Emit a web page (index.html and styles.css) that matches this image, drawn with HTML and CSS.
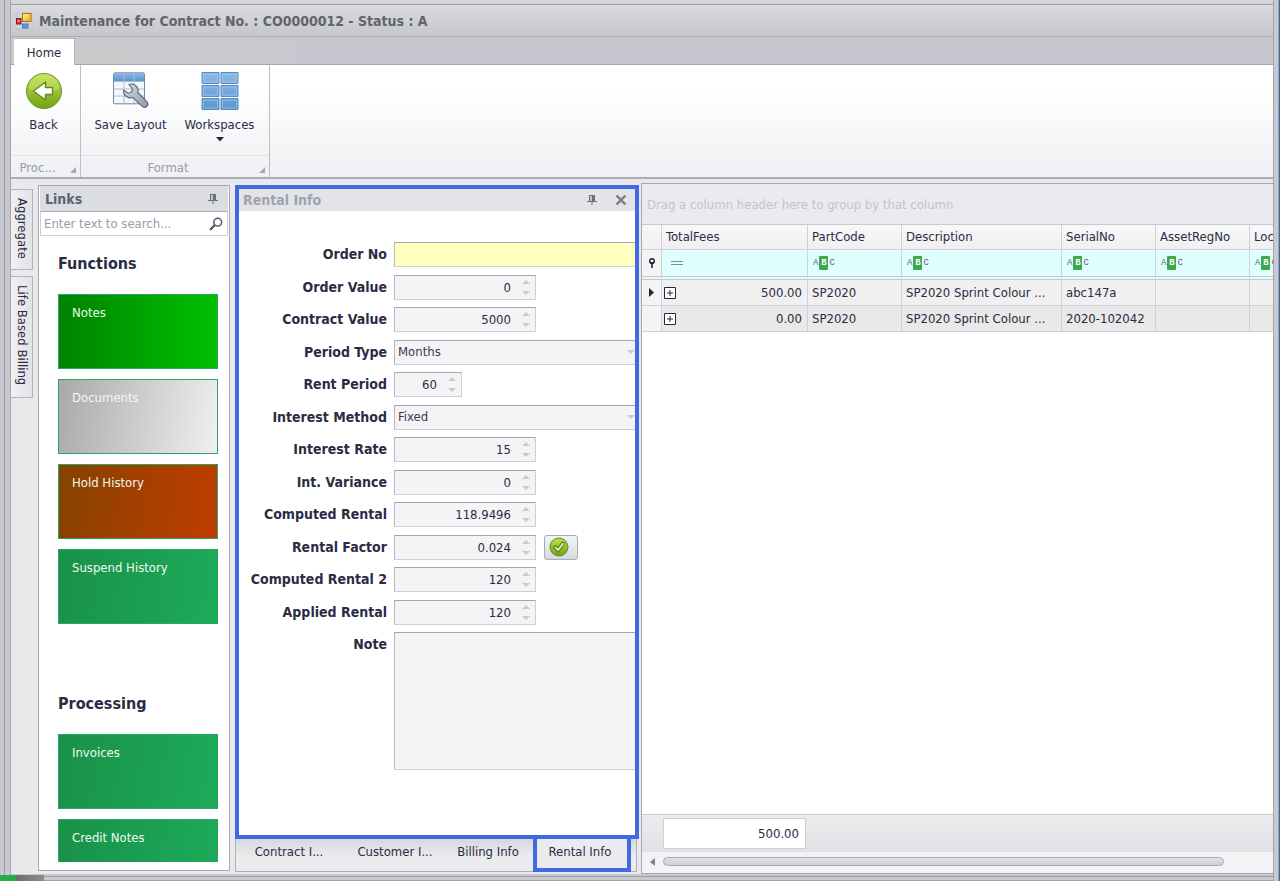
FILE: index.html
```
<!DOCTYPE html>
<html lang="en">
<head>
<meta charset="utf-8">
<title>Maintenance for Contract</title>
<link rel="stylesheet" href="styles.css">
</head>
<body>
<svg class="defs" width="0" height="0" aria-hidden="true">
  <defs>
    <linearGradient id="green" x1="0" y1="0" x2="0" y2="1"><stop offset="0" stop-color="#bfe052"/><stop offset="1" stop-color="#6fa50f"/></linearGradient>
    <linearGradient id="blue" x1="0" y1="0" x2="0" y2="1"><stop offset="0" stop-color="#8db9e6"/><stop offset="1" stop-color="#5b95d0"/></linearGradient>
    <linearGradient id="steel" x1="0" y1="0" x2="1" y2="1"><stop offset="0" stop-color="#d3dbe4"/><stop offset="1" stop-color="#8e9aab"/></linearGradient>
    <linearGradient id="gold" x1="0" y1="0" x2="1" y2="1"><stop offset="0" stop-color="#fff0a0"/><stop offset="1" stop-color="#eda80c"/></linearGradient>
  </defs>
  <symbol id="pin" viewBox="0 0 10 12"><path d="M2 1h6v6h2v1H5.500v3h-1V8H0V7h2z" fill="#6d717f"/><path d="M3 2h2v5H3z" fill="#c3c5cd"/></symbol>
  <symbol id="spin" viewBox="0 0 8 17"><path d="M0 5l4-4 4 4zM0 12h8l-4 4z" fill="#c9cace"/></symbol>
  <symbol id="plus" viewBox="0 0 12 12"><path d="M.5.5h11v11H.5zM3 6h6M6 3v6" fill="#fff" stroke="#26263c"/></symbol>
  <symbol id="corner" viewBox="0 0 6 6"><path d="M6 0v6H0z" fill="#a5a7b0"/></symbol>
</svg>
<div class="window">
  <header class="titlebar">
    <svg width="18" height="18" viewBox="0 0 18 18"><path d="M1 1h16v16H1z" fill="#d4d5d8" stroke="#bbbcc0" stroke-width=".6"/><rect x="7.500" y="1.500" width="8.500" height="8" fill="url(#gold)" stroke="#a87908"/><rect x="1.500" y="6.500" width="4.500" height="5.500" fill="#d43a35" stroke="#8f1717"/><rect x="2.800" y="8" width="1.600" height="1.800" fill="#ffb1a4"/><rect x="7.500" y="12" width="5.500" height="4" fill="#5b9cf0" stroke="#4677bd"/></svg>
    <h1>Maintenance for Contract No. : CO0000012 - Status : A</h1>
  </header>
  <nav class="ribbon-tabs"><button type="button" class="ribbon-tab">Home</button></nav>
  <section class="ribbon">
    <div class="group group-process">
      <div class="group-items">
        <button type="button" class="tool">
          <svg width="38" height="38" viewBox="0 0 38 38"><circle cx="19" cy="19" r="17.500" fill="url(#green)" stroke="#688f2b"/><path d="M4 17a15 15 0 0 1 30 0q-15 6-30 0z" fill="#d6ee7e" opacity=".35"/><path d="M8.500 19l12-9v5.500h7v7h-7V28z" fill="#fff" stroke="#62892a" stroke-width="1.400" stroke-linejoin="round"/></svg>
          <span>Back</span>
        </button>
      </div>
      <div class="group-name"><span>Proc...</span><svg width="6" height="6"><use href="#corner"/></svg></div>
    </div>
    <div class="group group-format">
      <div class="group-items">
        <button type="button" class="tool">
          <svg width="38" height="38" viewBox="0 0 38 38"><rect x="1.500" y=".800" width="31" height="31" rx="1.500" fill="#f3f7fc" stroke="#6d87a8"/><path d="M2 1h30v8H2z" fill="url(#blue)"/><path d="M2 9.500h30M2 17h30M2 24h30M12 1v30M22 1v30" stroke="#a9bcd4" fill="none"/><path d="M17 12.500c3.500-1.600 8 .5 9 4.500.3 1.300.2 2.400-.2 3.500l9.400 9.500c2.300 3.500-2 7-5 4.300l-9.300-8.800c-4 1.200-8.200-.8-9.200-4.800l-.1-2.400 4.400 2.700c2.700.2 4.600-1.600 4.300-4.400z" fill="url(#steel)" stroke="#5a6678" stroke-width="1.100"/></svg>
          <span>Save Layout</span>
        </button>
        <button type="button" class="tool">
          <svg width="38" height="38" viewBox="0 0 38 38"><g fill="url(#blue)" stroke="#5b8cc0"><path d="M1 .500h17v11H1zM20 .500h17v11H20zM1 13.500h17v11H1zM20 13.500h17v11H20zM1 26.500h17v11H1zM20 26.500h17v11H20z"/></g><path d="M2.500 2h14v8h-14zM21.500 2h14v8h-14zM2.500 15h14v8h-14zM21.500 15h14v8h-14zM2.500 28h14v8h-14zM21.500 28h14v8h-14z" fill="none" stroke="#a8cbee" stroke-width=".7"/></svg>
          <span>Workspaces</span>
          <svg class="drop" width="8" height="5" viewBox="0 0 8 5"><path d="M0 0h8L4 4.500z" fill="#26263c"/></svg>
        </button>
      </div>
      <div class="group-name"><span>Format</span><svg width="6" height="6"><use href="#corner"/></svg></div>
    </div>
  </section>

  <main class="workspace">
    <nav class="side-tabs">
      <button type="button" class="side-tab">Aggregate</button>
      <button type="button" class="side-tab side-tab-long">Life Based Billing</button>
    </nav>

    <aside class="links">
      <div class="panel-head"><h2>Links</h2><svg width="10" height="12"><use href="#pin"/></svg></div>
      <div class="search">
        <input type="text" placeholder="Enter text to search..." aria-label="Search links">
        <svg width="14" height="14" viewBox="0 0 14 14"><circle cx="8.700" cy="5.200" r="3.900" fill="none" stroke="#55566a" stroke-width="1.500"/><path d="M5.800 8L1 13" stroke="#55566a" stroke-width="2.200"/></svg>
      </div>
      <div class="link-list">
        <section class="link-group">
          <h3>Functions</h3>
          <button type="button" class="tile tile-notes">Notes</button>
          <button type="button" class="tile tile-documents">Documents</button>
          <button type="button" class="tile tile-hold">Hold History</button>
          <button type="button" class="tile">Suspend History</button>
        </section>
        <section class="link-group">
          <h3>Processing</h3>
          <button type="button" class="tile">Invoices</button>
          <button type="button" class="tile">Credit Notes</button>
        </section>
      </div>
    </aside>

    <section class="rental">
      <div class="rental-box">
        <div class="panel-head panel-head-idle"><h2>Rental Info</h2>
          <div class="head-icons"><svg width="10" height="12"><use href="#pin"/></svg><svg width="12" height="10" viewBox="0 0 12 10"><path d="M1.500.5l9 9M10.500.5l-9 9" stroke="#7a7d8a" stroke-width="2.400"/></svg></div>
        </div>
        <form class="form">
          <div class="fields">
            <label for="orderNo">Order No</label><div class="field wide"><input id="orderNo" class="required" type="text"></div>
            <label for="orderValue">Order Value</label><div class="field num"><input id="orderValue" type="text" value="0"><svg width="8" height="17"><use href="#spin"/></svg></div>
            <label for="contractValue">Contract Value</label><div class="field num"><input id="contractValue" type="text" value="5000"><svg width="8" height="17"><use href="#spin"/></svg></div>
            <label for="periodType">Period Type</label><div class="field wide"><select id="periodType"><option>Months</option></select><svg width="8" height="5" viewBox="0 0 8 5"><path d="M0 0h8L4 4z" fill="#c9cace"/></svg></div>
            <label for="rentPeriod">Rent Period</label><div class="field num short"><input id="rentPeriod" type="text" value="60"><svg width="8" height="17"><use href="#spin"/></svg></div>
            <label for="interestMethod">Interest Method</label><div class="field wide"><select id="interestMethod"><option>Fixed</option></select><svg width="8" height="5" viewBox="0 0 8 5"><path d="M0 0h8L4 4z" fill="#c9cace"/></svg></div>
            <label for="interestRate">Interest Rate</label><div class="field num"><input id="interestRate" type="text" value="15"><svg width="8" height="17"><use href="#spin"/></svg></div>
            <label for="variance">Int. Variance</label><div class="field num"><input id="variance" type="text" value="0"><svg width="8" height="17"><use href="#spin"/></svg></div>
            <label for="computed">Computed Rental</label><div class="field num"><input id="computed" type="text" value="118.9496"><svg width="8" height="17"><use href="#spin"/></svg></div>
            <label for="factor">Rental Factor</label>
            <div class="with-button"><div class="field num"><input id="factor" type="text" value="0.024"><svg width="8" height="17"><use href="#spin"/></svg></div>
              <button type="button" class="apply" aria-label="Apply rental factor"><svg width="20" height="20" viewBox="0 0 20 20"><circle cx="10" cy="10" r="9" fill="url(#green)" stroke="#5f8825"/><path d="M4.500 10.500l2.200-2 2.300 2.300 4.500-6 2.300 1.700-6.500 8.700z" fill="#e6f4b8" stroke="#56801c" stroke-width="1.100" stroke-linejoin="round"/></svg></button></div>
            <label for="computed2">Computed Rental 2</label><div class="field num"><input id="computed2" type="text" value="120"><svg width="8" height="17"><use href="#spin"/></svg></div>
            <label for="applied">Applied Rental</label><div class="field num"><input id="applied" type="text" value="120"><svg width="8" height="17"><use href="#spin"/></svg></div>
          </div>
          <div class="note-row"><label for="note">Note</label><textarea id="note"></textarea></div>
        </form>
      </div>
      <div class="bottom-tabs">
        <button type="button">Contract I...</button>
        <button type="button">Customer I...</button>
        <button type="button">Billing Info</button>
        <button type="button" class="active">Rental Info</button>
      </div>
    </section>

    <section class="grid">
      <div class="group-hint">Drag a column header here to group by that column</div>
      <div class="grid-body">
        <table>
          <colgroup><col class="c-mark"><col class="c-fees"><col class="c-std"><col class="c-desc"><col class="c-std"><col class="c-std"><col class="c-std"></colgroup>
          <thead>
            <tr><th></th><th>TotalFees</th><th>PartCode</th><th>Description</th><th>SerialNo</th><th>AssetRegNo</th><th>Loc</th></tr>
            <tr class="filter">
              <td class="mark"><svg width="8" height="10" viewBox="0 0 8 10"><circle cx="4" cy="3" r="2.300" fill="none" stroke="#26263c" stroke-width="1.500"/><path d="M1 4h6L4.800 6.500V10H3.200V6.500z" fill="#26263c"/></svg></td>
              <td class="equals"><svg width="12" height="5" viewBox="0 0 12 5"><path d="M0 .5h12M0 3.500h12" stroke="#7d8a94"/></svg></td>
              <td><span class="abc">A<b>B</b>C</span></td><td><span class="abc">A<b>B</b>C</span></td><td><span class="abc">A<b>B</b>C</span></td><td><span class="abc">A<b>B</b>C</span></td><td><span class="abc">A<b>B</b>C</span></td>
            </tr>
          </thead>
          <tbody>
            <tr><td class="mark"><svg width="5" height="9" viewBox="0 0 5 9"><path d="M0 0l5 4.500L0 9z" fill="#26263c"/></svg></td>
              <td><div class="fee"><button type="button" class="expand" aria-label="Expand row"><svg width="12" height="12"><use href="#plus"/></svg></button>500.00</div></td>
              <td>SP2020</td><td>SP2020 Sprint Colour ...</td><td>abc147a</td><td></td><td></td></tr>
            <tr><td class="mark"></td>
              <td><div class="fee"><button type="button" class="expand" aria-label="Expand row"><svg width="12" height="12"><use href="#plus"/></svg></button>0.00</div></td>
              <td>SP2020</td><td>SP2020 Sprint Colour ...</td><td>2020-102042</td><td></td><td></td></tr>
          </tbody>
        </table>
      </div>
      <div class="summary"><div class="total">500.00</div></div>
      <div class="scroll"><svg width="5" height="8" viewBox="0 0 5 8"><path d="M5 0v8L0 4z" fill="#7f828e"/></svg><div class="thumb"></div></div>
    </section>
  </main>
  <div class="task-peek"></div>
</div>
</body>
</html>
```

FILE: styles.css
```
* { box-sizing: border-box; }

body {
  margin: 0;
  font: 13px/18px "DejaVu Sans Condensed", "Noto Sans", sans-serif;
  color: #2b2b44;
  overflow: hidden;
}

button, input, select, textarea { font: inherit; color: inherit; margin: 0; }
button { padding: 0; border: 0; background: none; border-radius: 0; }
h1, h2, h3 { margin: 0; font-size: 14px; }
svg { display: block; flex: none; }
.defs { position: absolute; }

.window {
  position: relative;
  height: 100vh;
  display: flex;
  flex-direction: column;
  padding: 4px 7px 7px 11px;
  background:
    linear-gradient(90deg, #c7c8d0 0 4px, #9b9ca6 4px 5px, #c7c8d0 5px 10px, #a3a4ae 10px 11px) left / 11px 100% no-repeat,
    linear-gradient(90deg, #a3a4ae 0 1px, #c9c9d2 1px 5px, #a0a3ac 5px 6px, #356a9e 6px 7px) right / 7px 100% no-repeat,
    linear-gradient(0deg, #a0a1a9 0 1px, #c8c9cf 1px 4px, #9b9ca6 4px 5px, #c8c9cf 5px 7px) bottom / 100% 7px no-repeat,
    #d4d5d8;
}

.titlebar {
  height: 33px;
  flex: none;
  display: flex;
  align-items: center;
  gap: 6px;
  padding-left: 4px;
  border-top: 1px solid #9b9ca6;
  border-bottom: 1px solid #acadb7;
  background: linear-gradient(#dadbdf, #c6c7ca);
}
.titlebar h1 { color: #62636e; }

.ribbon-tabs {
  height: 28px;
  flex: none;
  display: flex;
  padding-left: 3px;
  background: linear-gradient(90deg, #cacaca, #c7c7d0 25%);
  border-bottom: 1px solid #a5a6b1;
}
.ribbon-tab {
  width: 61px;
  height: 28px;
  margin-top: 1px;
  background: #fff;
  border: 1px solid #b4b5bd;
  border-width: 1px 1px 0 0;
}

.ribbon {
  height: 114px;
  flex: none;
  display: flex;
  background: linear-gradient(#fff 20%, #eef0f3);
  border-bottom: 2px solid #acadb4;
}
.group {
  display: flex;
  flex-direction: column;
  border-right: 1px solid #bdbec6;
}
.group-process { width: 70px; }
.group-format { width: 189px; }
.group-items { flex: 1; display: flex; padding: 7px 5px 0; }
.group-process .group-items { padding-left: 0; padding-right: 4px; }
.tool {
  flex: 1;
  display: flex;
  flex-direction: column;
  align-items: center;
  justify-content: flex-start;
  white-space: nowrap;
}
.tool span { margin-top: 6px; }
.drop { margin-top: 3px; }
.group-name {
  position: relative;
  height: 22px;
  line-height: 23px;
  text-align: center;
  color: #9a9ba6;
  border-top: 1px solid #e2e3e7;
}
.group-process .group-name { padding-right: 16px; }
.group-format .group-name { padding-right: 14px; }
.group-name svg { position: absolute; right: 4px; bottom: 4px; }

.workspace {
  flex: 1;
  min-height: 0;
  display: flex;
  background: #e9e9ec;
}

.side-tabs {
  width: 22px;
  flex: none;
  display: flex;
  flex-direction: column;
  gap: 6px;
  padding-top: 10px;
}
.side-tab {
  width: 22px;
  height: 81px;
  padding: 8px 0 0;
  writing-mode: vertical-rl;
  text-align: left;
  background: linear-gradient(90deg, #f0f0f2, #e2e3e6);
  border: 1px solid #b2b3bb;
  border-left: 0;
}
.side-tab-long { height: 122px; }

.links {
  width: 192px;
  flex: none;
  display: flex;
  flex-direction: column;
  margin: 6px 0 3px 5px;
  background: #fff;
  border: 1px solid #a5a7b1;
}
.panel-head {
  height: 25px;
  flex: none;
  display: flex;
  align-items: center;
  justify-content: space-between;
  padding: 0 10px 0 5px;
  margin: 0 1px;
  color: #5f6272;
  background: #dcdde1;
}
.panel-head-idle { height: 22px; margin: 0; padding: 0 8px 0 4px; color: #9fa2b0; background: #e3e4e8; }
.head-icons { display: flex; align-items: center; gap: 18px; }
.search {
  height: 25px;
  flex: none;
  display: flex;
  align-items: center;
  margin: 0 1px;
  padding-right: 4px;
  border: 1px solid #cfd0d6;
  border-top-color: #a5a7b1;
}
.search input { flex: 1; min-width: 0; padding: 0 3px; border: 0; outline: 0; background: none; }
.search input::placeholder { color: #9a9ba8; opacity: 1; }
.link-list {
  flex: 1;
  min-height: 0;
  overflow: hidden;
  display: flex;
  flex-direction: column;
  gap: 70px;
  margin: 18px 11px 8px 19px;
}
.link-group { display: flex; flex-direction: column; gap: 10px; }
.link-group h3 { font-size: 16px; line-height: 20px; margin-bottom: 10px; }
.tile {
  height: 75px;
  flex: none;
  display: flex;
  align-items: flex-start;
  padding: 9px 13px;
  color: #eefaf0;
  border: 1px solid #28a862;
  background: linear-gradient(100deg, #199149, #1dab5a);
}
.tile-notes { background: linear-gradient(90deg, #008200, #00c000); }
.tile-documents { background: linear-gradient(100deg, #a9a9a9, #f0f0f0); }
.tile-hold { background: linear-gradient(100deg, #854200, #c03d00); }

.rental {
  flex: 0 0 404px;
  display: flex;
  flex-direction: column;
  margin: 6px 0 2px 5px;
  min-width: 0;
}
.rental-box {
  flex: 1;
  min-height: 0;
  overflow: hidden;
  background: #fff;
  border: 4px solid #4169e1;
}
.form { padding-top: 31px; }
.fields {
  display: grid;
  grid-template-columns: 148px 1fr;
  grid-template-rows: repeat(12, 1fr);
  height: 390px;
  column-gap: 7px;
  align-items: start;
}
.form label { font-size: 14px; font-weight: bold; text-align: right; line-height: 25px; white-space: nowrap; }
.field { position: relative; height: 25px; }
.field input, .field select, .note-row textarea {
  display: block;
  width: 100%;
  height: 100%;
  padding: 0 3px;
  border: 1px solid #cfd0d5;
  border-top-color: #a3a5af;
  border-left-color: #b6b8c0;
  border-radius: 0;
  background: #f4f4f6;
  outline: 0;
}
.field select { appearance: none; color: #3a3a50; }
.field .required { background: #ffffc0; }
.num { width: 142px; }
.short { width: 68px; }
.num input { padding-right: 24px; text-align: right; }
.field svg { position: absolute; top: 4px; right: 6px; }
.wide input, .wide select { border-right: 0; }
.wide svg { top: 10px; right: 0; }
.with-button { display: flex; gap: 8px; }
.apply {
  width: 34px;
  height: 25px;
  padding-left: 4px;
  border: 1px solid #a9abb4;
  border-radius: 3px;
  background: linear-gradient(#f4f4f6, #d9dade);
}
.note-row { display: grid; grid-template-columns: 148px 1fr; column-gap: 7px; }
.note-row textarea { height: 138px; resize: none; border-right: 0; }

.bottom-tabs {
  height: 33px;
  flex: none;
  display: flex;
  margin-right: 2px;
  padding-right: 4px;
  background: linear-gradient(#d8d9dd, #ececef 60%);
  border: 1px solid #acaeb7;
  border-width: 0 1px 1px 1px;
}
.bottom-tabs button { flex: 0 0 auto; height: 26px; width: 106px; }
.bottom-tabs button:nth-child(3) { width: 80px; margin-right: 5px; }
.bottom-tabs .active {
  width: 98px;
  height: 33px;
  padding: 0 4px 4px 0;
  border: 4px solid #4169e1;
  border-top: 0;
  background: #ebebee;
}

.grid {
  flex: 1;
  min-width: 0;
  display: flex;
  flex-direction: column;
  margin: 4px 0 0 2px;
  border: 1px solid #a5a7b1;
  border-right: 0;
}
.group-hint { height: 40px; flex: none; padding: 12px 5px 0; color: #c2c3cc; background: #eaebee; }
.grid-body { flex: 1; min-height: 0; overflow: hidden; background: #fff; }
table { width: 702px; table-layout: fixed; border-collapse: separate; border-spacing: 0; }
.c-mark { width: 20px; }
.c-fees { width: 146px; }
.c-std { width: 94px; }
.c-desc { width: 160px; }
th, td {
  height: 26px;
  padding: 0 4px;
  text-align: left;
  font-weight: normal;
  white-space: nowrap;
  overflow: hidden;
  border-right: 1px solid #d0d1d8;
  border-bottom: 1px solid #d0d1d8;
}
th { background: linear-gradient(#f8f8f9, #f0f0f2); border-top: 1px solid #c6c7cf; }
.filter td { height: 30px; background: #dfffff; border-bottom: 4px double #c6c7cf; }
td.mark, .filter td.mark { background: #f4f4f5; padding: 0; }
.mark svg { margin: 0 auto; }
.filter .equals { padding-left: 9px; }
tbody td { background: #f0f0f1; }
tbody tr + tr td { background: #e9e9e9; }
.fee { display: flex; justify-content: space-between; align-items: center; padding-right: 1px; }
.expand { margin-left: -2px; }
.abc {
  display: flex;
  align-items: center;
  gap: 1px;
  padding-left: 1px;
  font: 9px/14px "Liberation Mono", monospace;
  color: #56646a;
}
.abc b { width: 9px; text-align: center; color: #fff; background: #3fa84d; border-radius: 1px; }
.summary {
  height: 38px;
  flex: none;
  padding: 3px 0 3px 21px;
  background: linear-gradient(#ececef, #e1e1e5);
  border-top: 1px solid #c9cad0;
}
.total {
  width: 143px;
  height: 31px;
  padding-right: 6px;
  line-height: 30px;
  text-align: right;
  background: #fff;
  border: 1px solid #cfd0d6;
}
.scroll { height: 21px; flex: none; display: flex; align-items: center; gap: 8px; padding: 0 49px 2px 8px; background: #f3f3f5; }
.thumb {
  flex: 1;
  height: 9px;
  border: 1px solid #a9abb4;
  border-radius: 5px;
  background: linear-gradient(#dfe0e4, #cfd0d6);
}

.task-peek {
  position: absolute;
  left: 0;
  bottom: 0;
  width: 44px;
  height: 6px;
  background: linear-gradient(90deg, #22ad48 0 16px, #6f6f6f 16px, #8b8b8b);
}
```
